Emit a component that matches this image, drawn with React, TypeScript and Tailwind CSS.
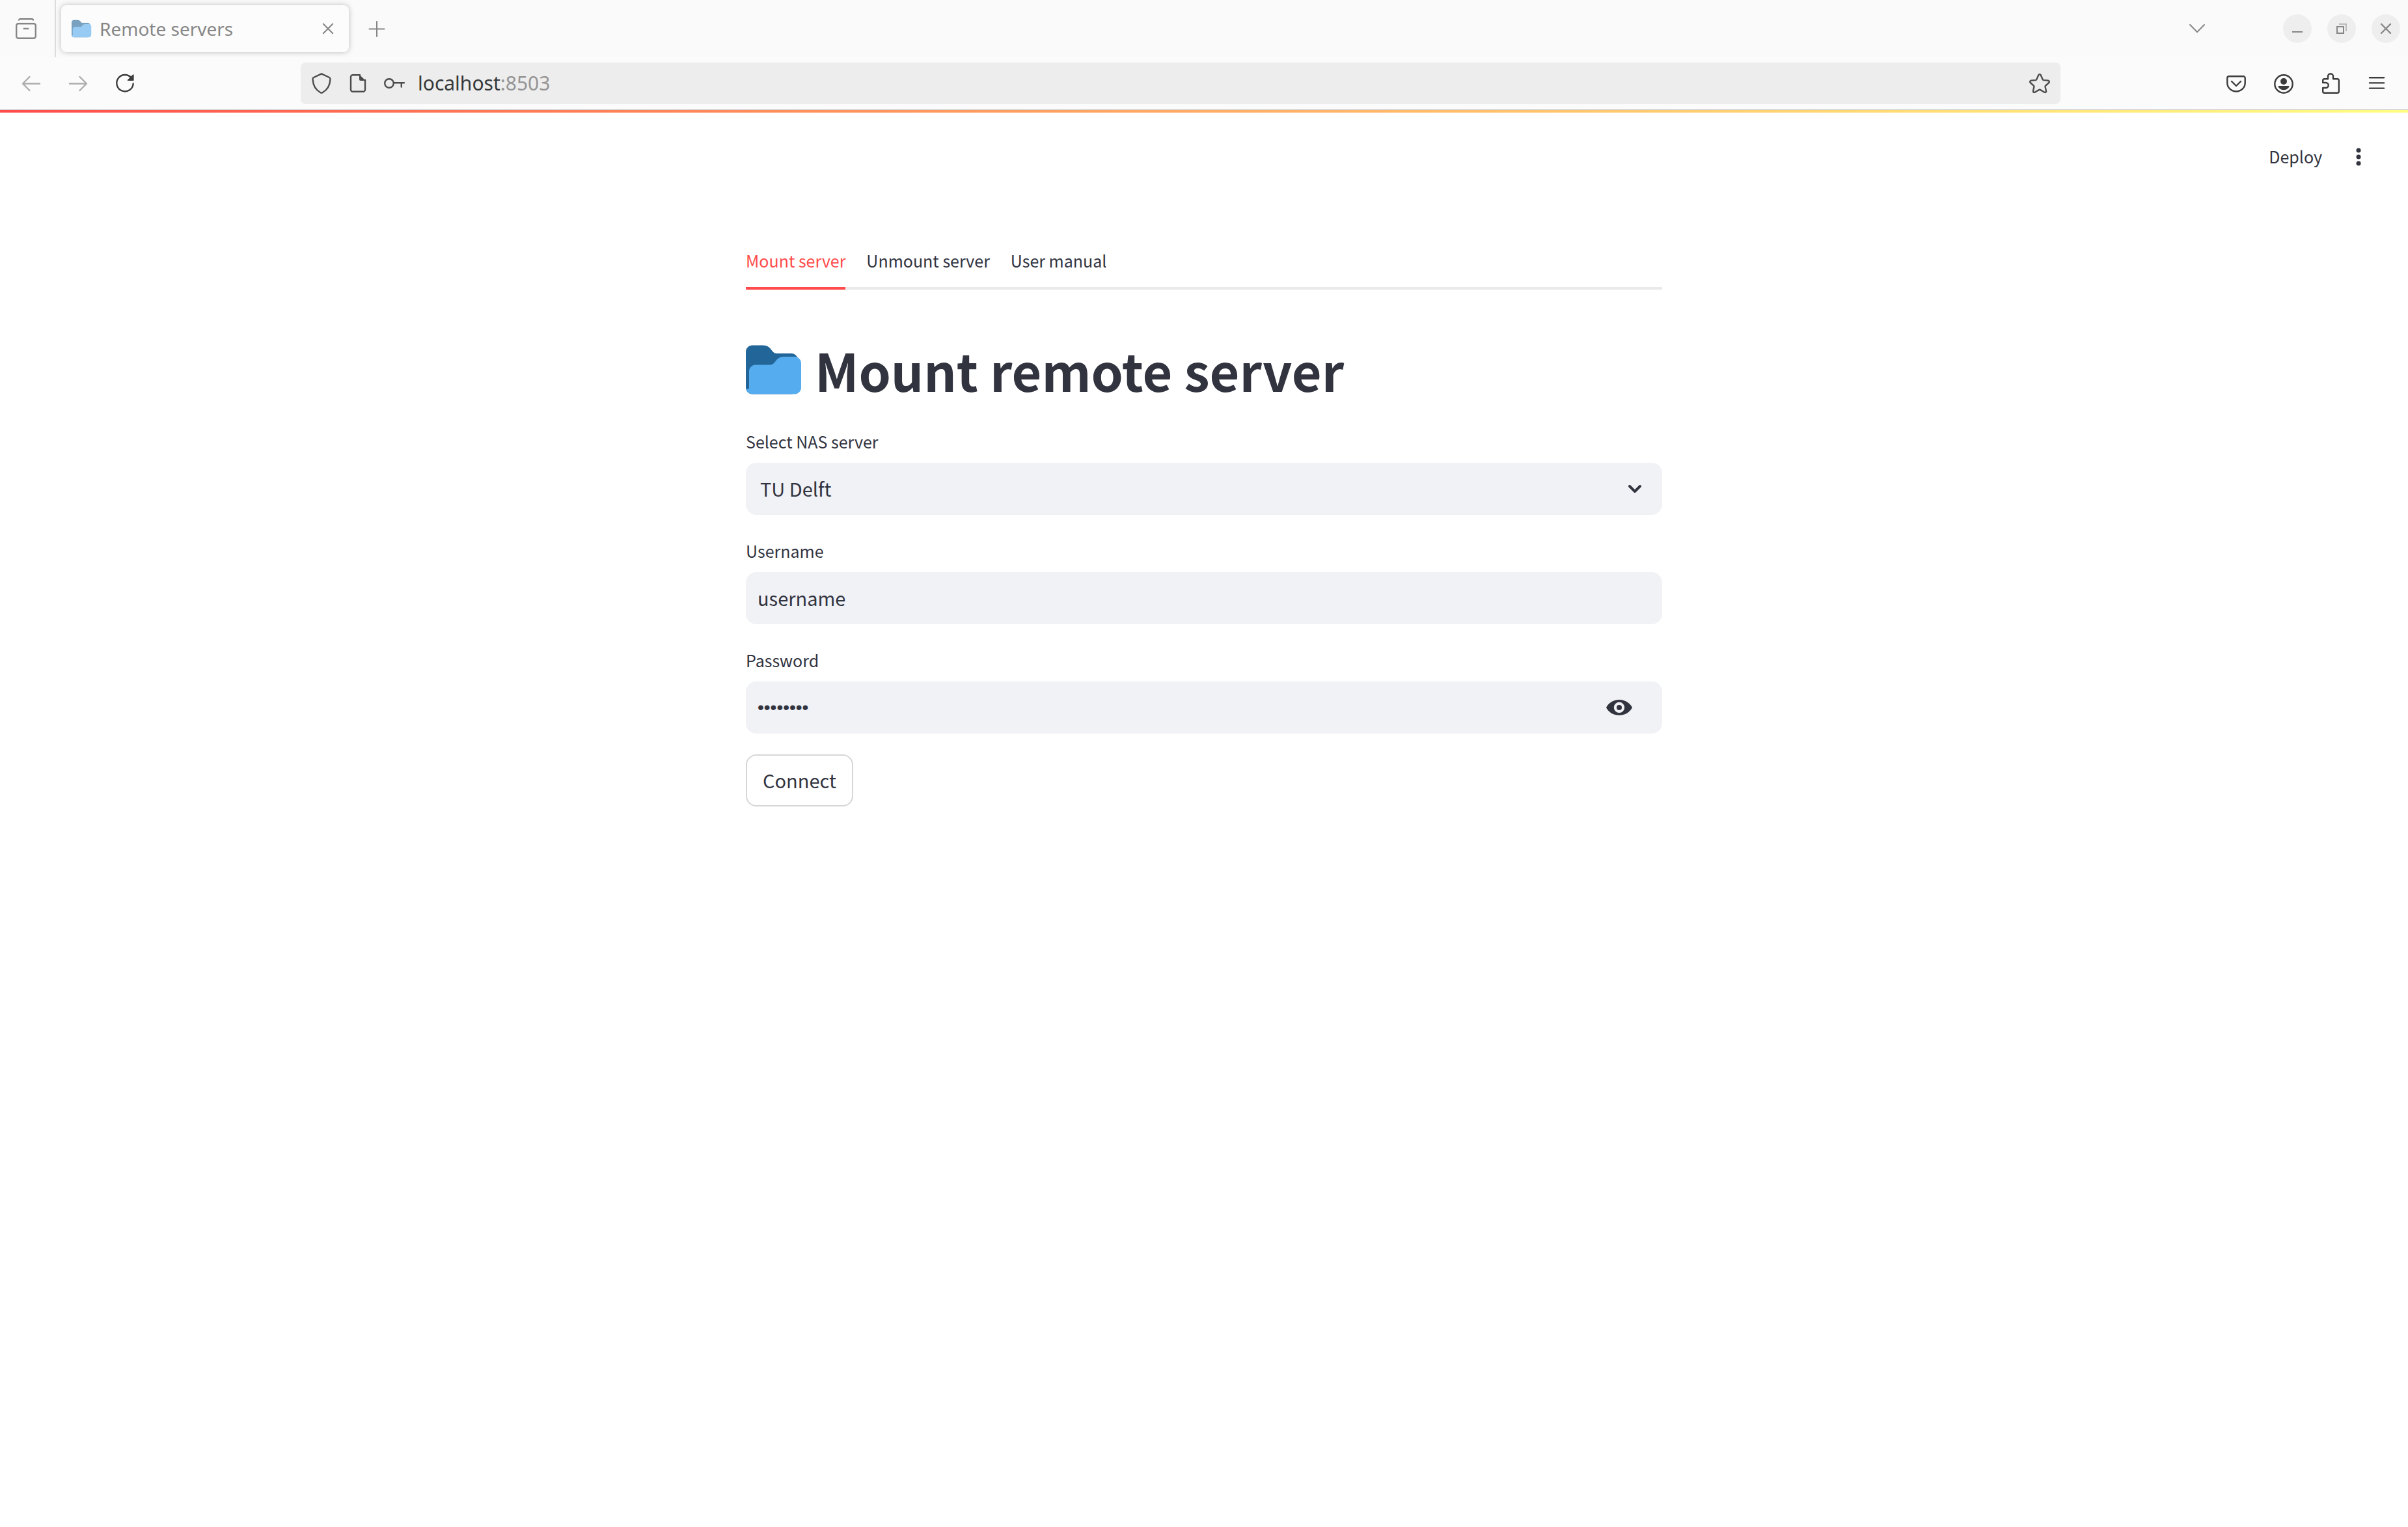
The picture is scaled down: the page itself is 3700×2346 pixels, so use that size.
import { useState } from "react";
import type { ReactNode } from "react";

function Icon({ children, className = "size-8" }: { children: ReactNode; className?: string }) {
  return (
    <svg
      viewBox="0 0 32 32"
      fill="none"
      stroke="currentColor"
      strokeWidth="2.4"
      strokeLinecap="round"
      strokeLinejoin="round"
      className={`shrink-0 ${className}`}
      aria-hidden="true"
    >
      {children}
    </svg>
  );
}

function Folder({ className }: { className: string }) {
  return (
    <svg viewBox="0 0 36 36" className={`shrink-0 ${className}`} aria-hidden="true">
      <path
        fill="#226699"
        d="M0 29c0 2.209 1.791 4 4 4h24c2.209 0 4-1.791 4-4V12c0-2.209-1.791-4-4-4h-9c-3.562 0-3-5-8.438-5H4C1.791 3 0 4.791 0 7v22z"
      />
      <path
        fill="#55ACEE"
        d="M30 10h-6.562C18 10 18.562 15 15 15H6c-2.209 0-4 1.791-4 4v10c0 .553-.447 1-1 1s-1-.447-1-1c0 2.209 1.791 4 4 4h26c2.209 0 4-1.791 4-4V14c0-2.209-1.791-4-4-4z"
      />
    </svg>
  );
}

function WindowButton({ label, children }: { label: string; children: ReactNode }) {
  return (
    <button aria-label={label} className="flex size-11 items-center justify-center rounded-full bg-[#eeeeee]">
      <Icon>{children}</Icon>
    </button>
  );
}

function TabStrip() {
  return (
    <div className="flex h-[88px] items-center bg-[#fafafa] pr-3 text-[#868686]">
      <button aria-label="View recent browsing" className="flex h-full w-[86px] items-center border-r-2 border-[#dcdcdc] pl-6">
        <Icon>
          <path d="M5 3.6V3.2a2 2 0 0 1 2-2h18a2 2 0 0 1 2 2v.4" strokeLinecap="butt" />
          <rect x="1.2" y="8.2" width="29.6" height="22.6" rx="3" />
          <path d="M13 16h6" strokeLinecap="square" />
        </Icon>
      </button>
      <div className="ml-2 flex h-[72px] w-[442px] items-center rounded-lg bg-[#fcfcfc] pr-4 pl-4 shadow-[0_0_8px_rgba(0,0,0,0.25)]">
        <Folder className="size-8 opacity-60" />
        <span className="ml-[11px] flex-1 text-[28px] leading-9">Remote servers</span>
        <button aria-label="Close tab">
          <Icon>
            <path d="M8.8 8.8l14.4 14.4M23.2 8.8L8.8 23.2" strokeWidth="2" />
          </Icon>
        </button>
      </div>
      <button aria-label="Open a new tab" className="ml-[27px]">
        <Icon>
          <path d="M16 5v23M4.500 16.500h23" strokeWidth="2" />
        </Icon>
      </button>
      <div className="ml-auto flex items-center gap-6">
        <button aria-label="List all tabs" className="mr-[92px]">
          <Icon>
            <path d="M5 10l11 11.200L27 10" strokeWidth="2" />
          </Icon>
        </button>
        <WindowButton label="Minimize">
          <path d="M8 21h16" strokeWidth="2" strokeLinecap="butt" />
        </WindowButton>
        <WindowButton label="Restore">
          <path d="M12 9h11v11" strokeWidth="2" strokeLinecap="butt" strokeLinejoin="miter" opacity="0.5" />
          <rect x="9" y="13" width="10" height="10" strokeWidth="2" strokeLinejoin="miter" />
        </WindowButton>
        <WindowButton label="Close">
          <path d="M9 9l14 14M23 9L9 23" />
        </WindowButton>
      </div>
    </div>
  );
}

function NavBar() {
  return (
    <div className="flex h-[81px] items-center border-b border-[#cccccc] bg-[#fbfbfb] pr-8 text-[#3c3c3c]">
      <div className="flex w-[462px] items-center gap-10 pl-8">
        <button aria-label="Back" className="text-[#adadad]">
          <Icon>
            <path d="M29 16.500H3.500M13.500 6L3 16.500 13.500 27" />
          </Icon>
        </button>
        <button aria-label="Forward" className="text-[#adadad]">
          <Icon>
            <path d="M3 16.500h25.500M18.500 6L29 16.500 18.500 27" />
          </Icon>
        </button>
        <button aria-label="Reload">
          <Icon>
            <path d="M25.500 7.200A12.700 12.700 0 1 0 28.700 16.500" />
            <path d="M29.600 3v8.200a.8.800 0 0 1-.8.800h-8.200c-.7 0-1.100-.8-.6-1.300l8.200-8.200c.5-.5 1.400-.2 1.400.5z" fill="currentColor" stroke="none" />
          </Icon>
        </button>
      </div>
      <div className="flex h-16 flex-1 items-center rounded-lg bg-[#ededed] px-4 text-[#4c4c4c]">
        <button aria-label="Tracking protection">
          <Icon>
            <path d="M16 1.300L28 7c1.200.6 1.600 1.200 1.500 2.500C29 19.500 24.500 26.500 17.500 30.200c-1 .6-2 .6-3 0C7.500 26.500 3 19.500 2.500 9.500 2.400 8.200 2.800 7.600 4 7z" />
          </Icon>
        </button>
        <button aria-label="Site information" className="ml-6">
          <Icon>
            <path d="M19 3.200H8a3 3 0 0 0-3 3v19.600a3 3 0 0 0 3 3h16a3 3 0 0 0 3-3V11" />
            <path d="M18 2.500l10 9.500h-8a2 2 0 0 1-2-2z" fill="currentColor" stroke="none" />
          </Icon>
        </button>
        <button aria-label="Saved passwords" className="ml-6">
          <Icon>
            <circle cx="8" cy="16" r="6.800" />
            <path d="M15 15.200h16M26.800 15.500v6" />
          </Icon>
        </button>
        <a href="#address" className="ml-5 flex-1 text-[30px] leading-9 text-[#353839]">
          localhost<span className="text-[#959595]">:8503</span>
        </a>
        <button aria-label="Bookmark this page">
          <Icon>
            <path d="M14.300 3.300c.7-1.600 2.700-1.600 3.400 0l3 6.700c.3.600.8 1 1.500 1.100l6.900.7c1.700.2 2.300 2.100 1.100 3.200l-5 4.600c-.5.500-.7 1.100-.6 1.700l1.400 6.600c.3 1.700-1.200 2.600-2.600 1.800l-6.200-3.600c-.7-.4-1.700-.4-2.400 0l-6.200 3.600c-1.400.8-2.900-.1-2.600-1.800l1.400-6.600c.1-.6-.1-1.200-.6-1.700l-5-4.600c-1.200-1.100-.6-3 1.100-3.200l6.900-.7c.7-.1 1.200-.5 1.500-1.100z" />
          </Icon>
        </button>
      </div>
      <div className="ml-[254px] flex items-center gap-10">
        <button aria-label="Save to Pocket">
          <Icon>
            <path d="M5 5.200h22a2.700 2.700 0 0 1 2.700 2.700V15.500a13.700 13 0 0 1-27.400 0V7.900A2.700 2.700 0 0 1 5 5.200z" />
            <path d="M9 13l7 7 7-7" />
          </Icon>
        </button>
        <button aria-label="Account">
          <Icon>
            <circle cx="17" cy="17" r="13.700" />
            <circle cx="17" cy="13" r="5" fill="currentColor" stroke="none" />
            <path d="M9.500 20h15c1 0 1.400.9.800 1.700-4.300 6-12.300 6-16.600 0-.6-.8-.2-1.700.8-1.700z" fill="currentColor" stroke="none" />
          </Icon>
        </button>
        <button aria-label="Extensions">
          <Icon>
            <path d="M5.200 15v-3.500a2.200 2.200 0 0 1 2.200-2.200H13V5.200a4 4 0 0 1 8 0v4.100h6.600a2.200 2.200 0 0 1 2.200 2.200v17a2.200 2.200 0 0 1-2.200 2.200H7.400a2.200 2.200 0 0 1-2.200-2.200V23h4.500a4 4 0 0 0 0-8z" />
          </Icon>
        </button>
        <button aria-label="Open application menu">
          <Icon>
            <path d="M5 7.200h22M5 15.400h22M5 23.600h22" />
          </Icon>
        </button>
      </div>
    </div>
  );
}

const tabs = ["Mount server", "Unmount server", "User manual"];

export default function App() {
  const [active, setActive] = useState(tabs[0]);
  const [visible, setVisible] = useState(false);
  return (
    <div className="min-h-screen bg-white font-['Noto_Sans_CJK_SC',sans-serif] text-[#31333f]">
      <div className="font-['Noto_Sans',sans-serif]">
        <TabStrip />
        <NavBar />
      </div>
      <div className="h-1 bg-linear-to-r from-[#ff4b4b] to-[#fffd80]" />
      <header className="flex h-[134px] items-center justify-end pr-[60px]">
        <button className="text-[25px] leading-[42px]">Deploy</button>
        <button aria-label="Main menu" className="ml-10">
          <Icon>
            <g fill="currentColor" stroke="none">
              <circle cx="16" cy="7" r="3.500" />
              <circle cx="16" cy="17" r="3.500" />
              <circle cx="16" cy="27" r="3.500" />
            </g>
          </Icon>
        </button>
      </header>
      <main className="mx-auto max-w-[1408px] pt-[54px]">
        <div role="tablist" className="flex gap-8 border-b-4 border-[#eaeaec]">
          {tabs.map((tab) => (
            <button
              key={tab}
              role="tab"
              aria-selected={tab === active}
              onClick={() => setActive(tab)}
              className={`-mb-1 h-[84px] border-b-4 pb-[2px] text-[25px] leading-[42px] ${
                tab === active ? "border-[#ff4b4b] text-[#ff4b4b]" : "border-transparent"
              }`}
            >
              {tab}
            </button>
          ))}
        </div>
        <h1 className="mt-[70px] flex items-center gap-4 text-[79px] leading-[106px] font-bold">
          <Folder className="size-[90px]" />
          Mount remote server
        </h1>
        <form className="mt-9 flex flex-col" onSubmit={(e) => e.preventDefault()}>
          <label htmlFor="server" className="mb-3 text-[25px] leading-[42px]">
            Select NAS server
          </label>
          <div className="relative">
            <select
              id="server"
              className="h-20 w-full appearance-none rounded-2xl bg-[#f0f2f6] pr-20 pb-[2px] pl-[22px] text-[29px] leading-[48px]"
            >
              <option>TU Delft</option>
            </select>
            <Icon className="pointer-events-none absolute top-6 right-[26px] size-8">
              <path d="M8 12l8 8 8-8" strokeWidth="4" />
            </Icon>
          </div>
          <label htmlFor="username" className="mt-[34px] mb-3 text-[25px] leading-[42px]">
            Username
          </label>
          <input
            id="username"
            defaultValue="username"
            className="h-20 rounded-2xl bg-[#f0f2f6] px-[18px] pb-[2px] text-[29px] leading-[48px]"
          />
          <label htmlFor="password" className="mt-[34px] mb-3 text-[25px] leading-[42px]">
            Password
          </label>
          <div className="flex h-20 items-center rounded-2xl bg-[#f0f2f6] pr-11">
            <input
              id="password"
              type={visible ? "text" : "password"}
              defaultValue="password"
              className="h-20 min-w-0 flex-1 bg-transparent px-[18px] font-['Liberation_Sans',sans-serif] text-[28px] leading-[48px]"
            />
            <button type="button" aria-label="Show password" onClick={() => setVisible(!visible)}>
              <svg viewBox="0 0 44 32" className="h-8 w-11" fill="currentColor" aria-hidden="true">
                <path
                  fillRule="evenodd"
                  d="M22 4C13 4 5.300 9 2 16c3.300 7 11 12 20 12s16.700-5 20-12C38.700 9 31 4 22 4zm0 20.200a8.200 8.200 0 1 1 0-16.400 8.200 8.200 0 0 1 0 16.400zm0-12.200a4 4 0 1 0 0 8 4 4 0 0 0 0-8z"
                />
              </svg>
            </button>
          </div>
          <button
            type="submit"
            className="mt-8 h-20 self-start rounded-2xl border-2 border-[#d6d6d9] bg-white px-6 pb-[2px] text-[29px] leading-[48px]"
          >
            Connect
          </button>
        </form>
      </main>
    </div>
  );
}
